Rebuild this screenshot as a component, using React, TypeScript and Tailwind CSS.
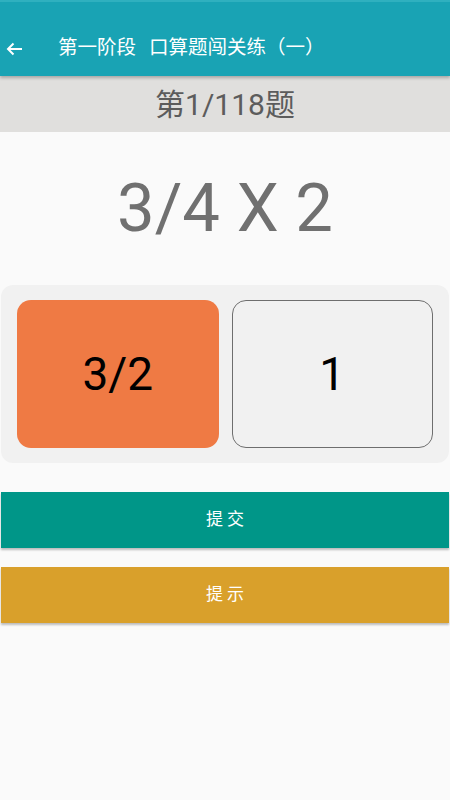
export default function App() {
  const font = { fontFamily: 'Roboto, "Noto Sans CJK SC", sans-serif' };

  return (
    <div className="w-[450px] h-[800px] bg-[#fafafa] overflow-hidden flex flex-col" style={font}>
      {/* toolbar */}
      <div className="h-[76px] bg-[#19a3b4] border-t-2 border-[#2fb0bf] flex items-end pb-[15px] shadow-[0_2px_3px_rgba(0,0,0,0.25)] relative z-10">
        <svg width="17" height="14" viewBox="0 0 17 14" className="ml-[6px] mb-[5px]" fill="none" stroke="white" strokeWidth="2">
          <path d="M16 7H2M7.5 1.5 2 7l5.5 5.5" />
        </svg>
        <span className="ml-[35px] text-white text-[19.5px] leading-[26px] flex gap-[13px]">
          <span>第一阶段</span>
          <span>口算题闯关练（一）</span>
        </span>
      </div>

      {/* progress */}
      <div className="h-[56px] bg-[#e0dfdd] flex items-center justify-center">
        <span className="text-[30px] text-[#5c5c5c]">第1/118题</span>
      </div>

      {/* question */}
      <div className="h-[153px] flex items-center justify-center">
        <span className="text-[67px] text-[#707070] leading-none">3/4 X 2</span>
      </div>

      {/* options */}
      <div className="mx-[1px] h-[178px] bg-[#f1f1f1] rounded-[12px] flex gap-[13px] px-[16px] py-[15px]">
        <div className="w-[202px] bg-[#ef7a44] rounded-[14px] flex items-center justify-center">
          <span className="text-[46px] text-black leading-none">3/2</span>
        </div>
        <div className="w-[202px] border-[1.5px] border-[#6e6e6e] rounded-[14px] flex items-center justify-center">
          <span className="text-[46px] text-black leading-none">1</span>
        </div>
      </div>

      {/* buttons */}
      <div className="mt-[29px] mx-[1px] h-[56px] bg-[#009688] flex items-center justify-center shadow-[0_2px_2px_rgba(0,0,0,0.25)]">
        <span className="text-white text-[17px]">提 交</span>
      </div>
      <div className="mt-[19px] mx-[1px] h-[56px] bg-[#d9a02b] flex items-center justify-center shadow-[0_2px_2px_rgba(0,0,0,0.25)]">
        <span className="text-white text-[17px]">提 示</span>
      </div>
    </div>
  );
}
